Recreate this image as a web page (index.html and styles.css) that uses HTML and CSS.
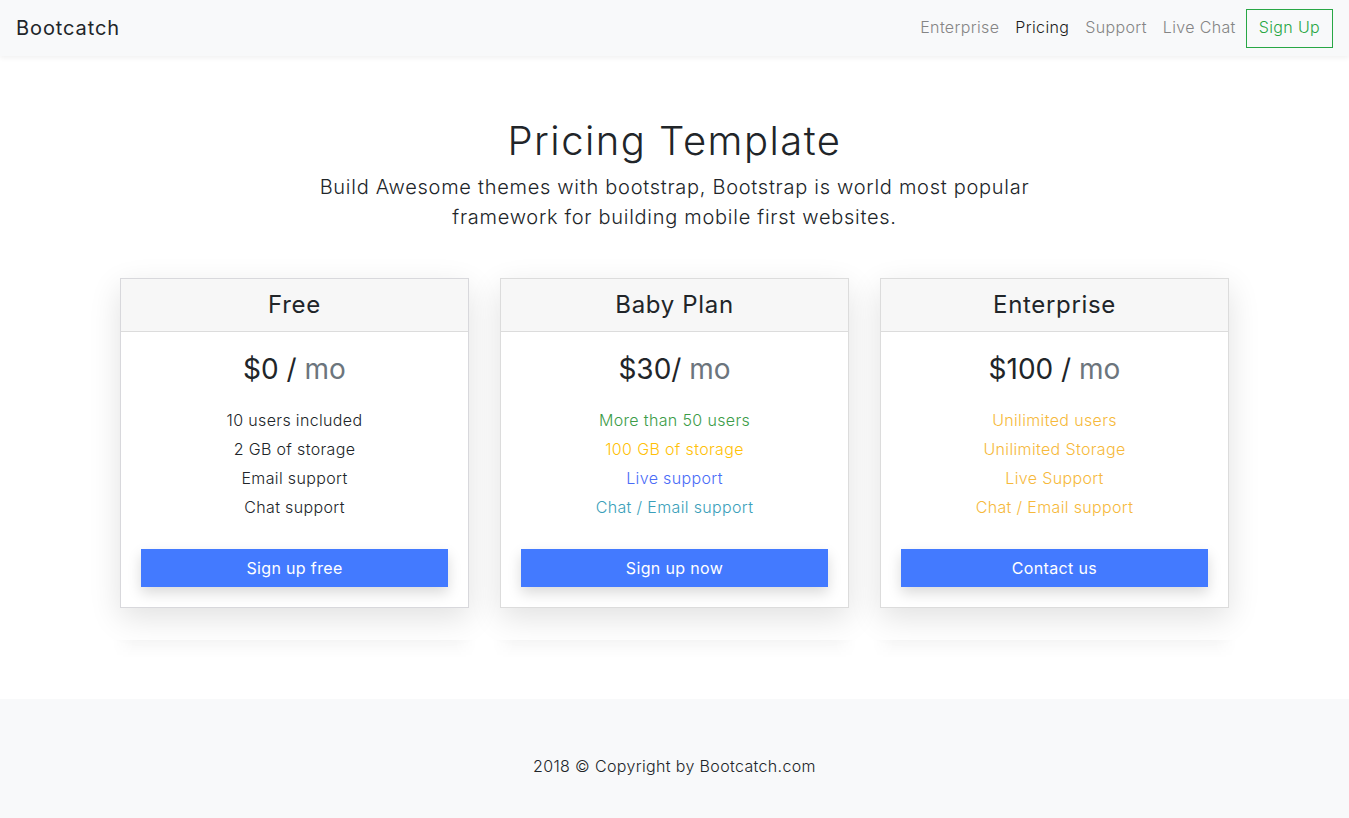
FILE: index.html
```html
<!DOCTYPE html>
<html lang="en">
<head>
<meta charset="utf-8">
<title>Pricing Template</title>
<link rel="stylesheet" href="styles.css">
</head>
<body>
<header class="navbar">
  <a class="brand" href="#">Bootcatch</a>
  <nav class="nav">
    <a class="nav-link" href="#">Enterprise</a>
    <a class="nav-link active" href="#">Pricing</a>
    <a class="nav-link" href="#">Support</a>
    <a class="nav-link" href="#">Live Chat</a>
    <a class="btn-outline" href="#">Sign Up</a>
  </nav>
</header>

<main class="main">
  <section class="hero">
    <h1 class="title">Pricing Template</h1>
    <p class="lead">Build Awesome themes with bootstrap, Bootstrap is world most popular<br>framework for building mobile first websites.</p>
  </section>

  <section class="plans">
    <div class="plan-col">
      <div class="card card-first">
        <div class="card-header">Free</div>
        <div class="card-body">
          <div class="price">$0 / <span class="unit">mo</span></div>
          <ul class="features">
            <li>10 users included</li>
            <li>2 GB of storage</li>
            <li>Email support</li>
            <li>Chat support</li>
          </ul>
          <a class="btn-primary" href="#">Sign up free</a>
        </div>
      </div>
      <div class="fade"></div>
    </div>
    <div class="plan-col">
      <div class="card">
        <div class="card-header">Baby Plan</div>
        <div class="card-body">
          <div class="price">$30/ <span class="unit">mo</span></div>
          <ul class="features">
            <li class="c-success">More than 50 users</li>
            <li class="c-warning">100 GB of storage</li>
            <li class="c-primary">Live support</li>
            <li class="c-info">Chat / Email support</li>
          </ul>
          <a class="btn-primary" href="#">Sign up now</a>
        </div>
      </div>
      <div class="fade"></div>
    </div>
    <div class="plan-col">
      <div class="card">
        <div class="card-header">Enterprise</div>
        <div class="card-body">
          <div class="price">$100 / <span class="unit">mo</span></div>
          <ul class="features">
            <li class="c-gold">Unilimited users</li>
            <li class="c-gold">Unilimited Storage</li>
            <li class="c-gold">Live Support</li>
            <li class="c-gold">Chat / Email support</li>
          </ul>
          <a class="btn-primary" href="#">Contact us</a>
        </div>
      </div>
      <div class="fade"></div>
    </div>
  </section>
</main>

<footer class="footer">
  <p>2018 © Copyright by Bootcatch.com</p>
</footer>
</body>
</html>
```

FILE: styles.css
```css
* { box-sizing: border-box; }
html, body { margin: 0; padding: 0; }
body {
  font-family: "Inter", "Open Sans", sans-serif;
  font-weight: 300;
  color: #212529;
  background: #fff;
  font-size: 16px;
  line-height: 1.5;
  letter-spacing: 0.022em;
}
a { text-decoration: none; }

.navbar {
  height: 56px;
  background: #f8f9fa;
  box-shadow: 0 2px 5px rgba(0,0,0,0.06);
  display: flex;
  align-items: center;
  justify-content: space-between;
  padding: 0 16px;
  position: relative;
  z-index: 2;
}
.brand { font-size: 20px; color: #212529; font-weight: 400; letter-spacing: 0.045em; margin-top: -1px; }
.nav { display: flex; align-items: center; }
.nav-link {
  color: #858585;
  padding: 8px 8px;
  font-size: 16px;
  margin-top: -2px;
}
.nav-link.active { color: #1d1d1d; }
.btn-outline {
  margin-left: 2px;
  border: 1px solid #28a745;
  color: #28a745;
  padding: 6px 12px 8px;
  font-size: 16px;
  line-height: 23px;
}

.main { padding-top: 61px; padding-bottom: 41px; }
.hero { text-align: center; }
.title {
  margin: 0;
  font-size: 40px;
  font-weight: 300;
  line-height: 48px;
  color: #212529;
  letter-spacing: 0.037em;
}
.lead {
  margin: 7px 0 0;
  font-size: 20px;
  line-height: 30px;
  font-weight: 300;
  letter-spacing: 0.036em;
}

.plans {
  margin-top: 46px;
  display: grid;
  grid-template-columns: repeat(3, 349px);
  column-gap: 31px;
  justify-content: center;
}
.card {
  border: 1px solid #dcdcdc;
  background: #fff;
  box-shadow: 0 10px 30px rgba(0,0,0,0.12);
  text-align: center;
}
.card-first { border-color: #d8d8dc; }
.card-header {
  height: 53px;
  background: #f7f7f7;
  border-bottom: 1px solid #dcdcdc;
  font-size: 24px;
  line-height: 52px;
  font-weight: 400;
  letter-spacing: 0.028em;
}
.card-body { padding: 19px 20px 20px; }
.price {
  font-size: 28px;
  line-height: 36px;
  font-weight: 400;
  color: #212529;
  letter-spacing: 0;
}
.unit { color: #6c757d; }
.features {
  list-style: none;
  margin: 19px 0 27px;
  padding: 0;
}
.features li { line-height: 29px; font-size: 16px; }
.c-success { color: #3c9c48; }
.c-warning { color: #ffc107; }
.c-primary { color: #4a6cf7; }
.c-info { color: #3b9fba; }
.c-gold { color: #f6b93b; }

.btn-primary {
  display: block;
  background: #437aff;
  color: #fff;
  font-size: 16px;
  line-height: 38px;
  height: 38px;
  font-weight: 400;
  box-shadow: 0 6px 14px rgba(0,0,0,0.15);
}

.fade {
  margin: 32px -8px 0;
  height: 18px;
  background: linear-gradient(rgba(0,0,0,0.03), rgba(0,0,0,0));
  -webkit-mask-image: linear-gradient(to right, transparent, #000 6%, #000 94%, transparent);
  mask-image: linear-gradient(to right, transparent, #000 6%, #000 94%, transparent);
}

.footer {
  background: #f8f9fa;
  height: 119px;
  display: flex;
  align-items: center;
  justify-content: center;
}
.footer p { margin: 0; font-size: 16px; padding-top: 15px; }
```
